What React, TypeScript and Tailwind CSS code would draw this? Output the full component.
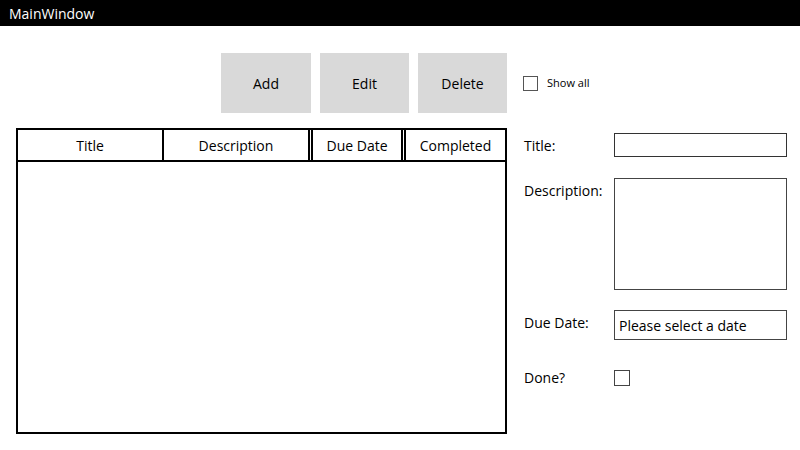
export default function App() {
  const font = { fontFamily: '"Open Sans", "Liberation Sans", sans-serif' };

  return (
    <div className="w-[800px] h-[450px] bg-white text-black overflow-hidden" style={font}>
      {/* Window title bar */}
      <div className="h-[26px] bg-black text-white flex items-center pl-[9px] text-[14px]">
        MainWindow
      </div>

      {/* Toolbar */}
      <div className="mt-[27px] pl-[221px] flex items-center">
        <div className="flex gap-[9px]">
          <button className="w-[90px] h-[60px] bg-[#d9d9d9] text-[14px]">Add</button>
          <button className="w-[89px] h-[60px] bg-[#d9d9d9] text-[14px]">Edit</button>
          <button className="w-[89px] h-[60px] bg-[#d9d9d9] text-[14px]">Delete</button>
        </div>
        <label className="ml-[16px] flex items-center gap-[9px]">
          <span className="w-[15px] h-[15px] border border-[#555] bg-white" />
          <span className="text-[11px]">Show all</span>
        </label>
      </div>

      {/* Content */}
      <div className="mt-[15px] flex">
        {/* Table */}
        <div className="ml-[16px] w-[491px] h-[306px] border-2 border-black">
          <div className="flex h-[32px] border-b-2 border-black text-[14px]">
            <div className="w-[146px] border-r-2 border-black flex items-center justify-center">Title</div>
            <div className="w-[146px] border-r-2 border-black flex items-center justify-center">Description</div>
            <div className="ml-[1px] w-[92px] border-x-2 border-black flex items-center justify-center">Due Date</div>
            <div className="ml-[1px] flex-1 border-l-2 border-black flex items-center justify-center">Completed</div>
          </div>
        </div>

        {/* Form */}
        <div className="ml-[17px] w-[263px] text-[14px]">
          <div className="mt-[5px] flex items-center">
            <div className="w-[90px]">Title:</div>
            <div className="w-[173px] h-[24px] border border-[#333]" />
          </div>
          <div className="mt-[21px] flex items-start">
            <div className="w-[90px] mt-[2px]">Description:</div>
            <div className="w-[173px] h-[112px] border border-[#444]" />
          </div>
          <div className="mt-[20px] flex items-center">
            <div className="w-[90px] -mt-[5px]">Due Date:</div>
            <div className="w-[173px] h-[30px] border border-[#444] flex items-center pl-[4px]">
              Please select a date
            </div>
          </div>
          <div className="mt-[27px] flex items-center">
            <div className="w-[90px]">Done?</div>
            <div className="w-[16px] h-[16px] border border-[#444]" />
          </div>
        </div>
      </div>
    </div>
  );
}
